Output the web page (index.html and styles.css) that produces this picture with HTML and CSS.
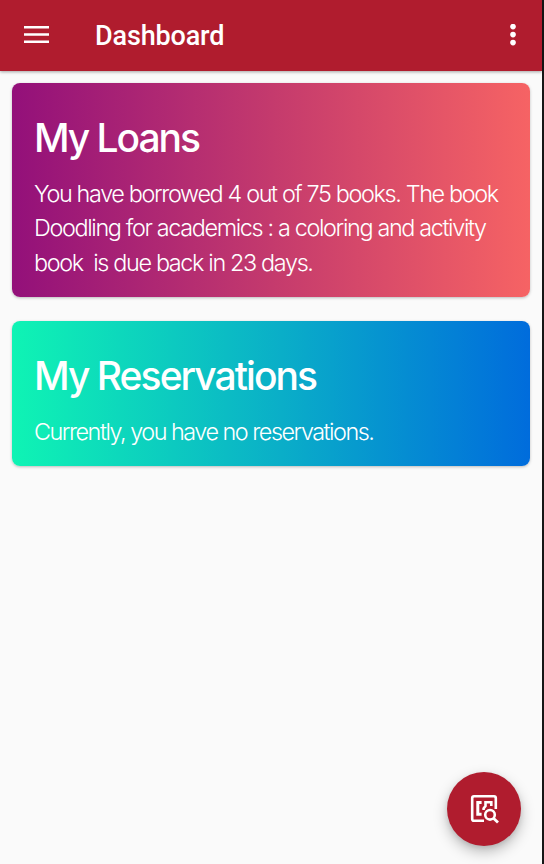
FILE: index.html
```html
<!DOCTYPE html>
<html lang="en">
<head>
<meta charset="utf-8">
<title>Dashboard</title>
<link rel="stylesheet" href="styles.css">
</head>
<body>
<div class="app">
  <header class="toolbar">
    <button class="icon-button" aria-label="Menu">
      <svg width="25" height="17" viewBox="0 0 25 17"><path d="M0 1.2h25M0 8.5h25M0 15.7h25" stroke="#fff" stroke-width="2.5"/></svg>
    </button>
    <h1 class="title">Dashboard</h1>
    <button class="icon-button more" aria-label="More">
      <svg width="6" height="22" viewBox="0 0 6 22" fill="#fff"><circle cx="3" cy="2.6" r="2.8"/><circle cx="3" cy="10.6" r="2.8"/><circle cx="3" cy="18.6" r="2.8"/></svg>
    </button>
  </header>
  <main class="cards">
    <section class="card loans">
      <h2 class="heading">My Loans</h2>
      <p class="body">You have borrowed 4 out of 75 books. The book<br>Doodling for academics : a coloring and activity<br>book&nbsp; is due back in 23 days.</p>
    </section>
    <section class="card reservations">
      <h2 class="heading reservations-heading">My Reservations</h2>
      <p class="body reservations-body">Currently, you have no reservations.</p>
    </section>
  </main>
  <button class="fab" aria-label="Search catalogue">
    <svg width="40" height="40" viewBox="0 0 40 40" fill="none" stroke="#fff" stroke-width="2.6">
      <path d="M20 30.8H10Q8.2 30.8 8.2 29V8Q8.2 6.3 10 6.3H30Q31.8 6.3 31.8 8V19"/>
      <path d="M17.6 12.4H13.8V24.2H17.6" stroke-width="3"/>
      <path d="M19.6 20V18.5L21.5 16V12.2H27.3V16"/>
      <circle cx="26" cy="24.8" r="4.8"/>
      <path d="M29.5 28.3L34 32.6" stroke-width="2.8"/>
    </svg>
  </button>
</div>
</body>
</html>
```
FILE: styles.css
```css
* { box-sizing: border-box; }
body { margin: 0; background: #161616; }
button { border: 0; padding: 0; background: none; }
h1, h2, p { margin: 0; }
.app {
  position: relative;
  width: 542px;
  height: 864px;
  background: #fafafa;
}
.toolbar {
  display: flex;
  align-items: center;
  height: 71px;
  padding: 0 26px 2px 24px;
  background: #b01c2e;
  color: #fff;
  box-shadow: 0 1px 3px rgba(0, 0, 0, .35);
}
.icon-button { display: flex; }
.more { margin-left: auto; }
.title {
  margin-left: 46px;
  padding-top: 3px;
  font: 500 27px/36px Roboto, sans-serif;
  letter-spacing: -.15px;
}
.cards {
  display: flex;
  flex-direction: column;
  gap: 24px;
  padding: 12px;
}
.card {
  padding: 29.5px 22px 0;
  border-radius: 8px;
  color: #fff;
  font-family: Inter, sans-serif;
  box-shadow: 0 1px 3px rgba(0, 0, 0, .25);
}
.loans { height: 214px; background: linear-gradient(90deg, #93107a, #c43a6d 50%, #f66364); }
.reservations { height: 145px; background: linear-gradient(90deg, #0ff4b4, #0aaec8 52%, #006cdc); }
.heading {
  font-size: 39px;
  line-height: 50px;
  font-weight: 500;
  letter-spacing: -2.05px;
}
.reservations-heading { letter-spacing: -1.95px; }
.body {
  margin-top: 14px;
  font-size: 23.4px;
  line-height: 34.6px;
  font-weight: 300;
  letter-spacing: -1.35px;
  white-space: nowrap;
}
.reservations-body { letter-spacing: -1.48px; }
.fab {
  position: absolute;
  left: 447px;
  top: 772px;
  display: flex;
  width: 74px;
  height: 74px;
  padding: 18px 17px;
  border-radius: 50%;
  background: #b01c2e;
  box-shadow: 0 6px 14px rgba(0, 0, 0, .25), 0 2px 5px rgba(0, 0, 0, .1);
}
```
